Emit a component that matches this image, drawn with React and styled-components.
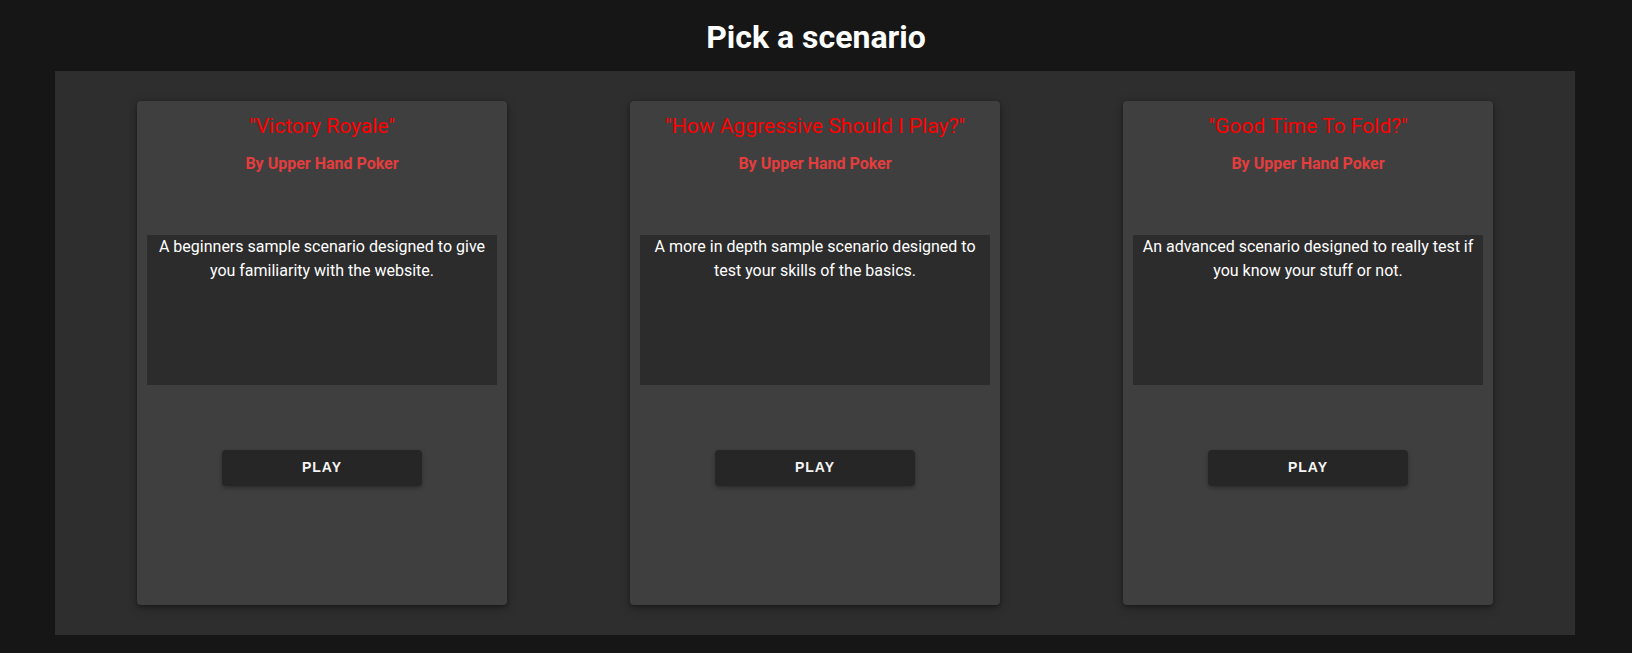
import React from "react";
import styled, { createGlobalStyle } from "styled-components";

const GlobalStyle = createGlobalStyle`
  html, body {
    margin: 0;
    padding: 0;
    background-color: #161616;
    font-family: Roboto, "Noto Sans", sans-serif;
  }
`;

const Page = styled.div`
  width: 100%;
  min-height: 653px;
  display: flex;
  flex-direction: column;
  align-items: center;
  box-sizing: border-box;
`;
const Heading = styled.h1`
  margin: 0;
  height: 71px;
  display: flex;
  align-items: center;
  justify-content: center;
  padding-top: 2px;
  box-sizing: border-box;
  font-size: 32px;
  font-weight: 700;
  color: #ffffff;
`;
const Panel = styled.div`
  width: 1520px;
  margin-left: -2px;
  display: flex;
  justify-content: space-between;
  box-sizing: border-box;
  padding: 30px 82px;
  background-color: #2e2e2e;
`;
const Card = styled.div`
  width: 370px;
  height: 504px;
  display: flex;
  flex-direction: column;
  align-items: center;
  box-sizing: border-box;
  padding: 10px;
  border-radius: 4px;
  background-color: #3f3f3f;
  box-shadow: 0 3px 10px rgba(0, 0, 0, 0.35), 0 1px 3px rgba(0, 0, 0, 0.25);
`;
const Title = styled.div`
  font-size: 21px;
  line-height: 30px;
  color: #ff0000;
  text-align: center;
`;
const Author = styled.div`
  margin-top: 11px;
  font-size: 16px;
  line-height: 24px;
  font-weight: 700;
  color: #e43d3d;
  text-align: center;
`;
const Description = styled.div`
  margin-top: 59px;
  width: 100%;
  height: 150px;
  box-sizing: border-box;
  padding: 0 8px;
  background-color: #2c2c2c;
  color: #ffffff;
  font-size: 16px;
  line-height: 24px;
  text-align: center;
`;
const PlayButton = styled.button`
  margin-top: 65px;
  width: 200px;
  height: 36px;
  padding: 0 0 2px;
  border: none;
  border-radius: 4px;
  background-color: #262626;
  color: #f5f5f5;
  font-family: "Liberation Sans", Arial, sans-serif;
  font-size: 14px;
  font-weight: 700;
  letter-spacing: 1px;
  text-transform: uppercase;
  box-shadow: 0 2px 4px rgba(0, 0, 0, 0.3);
  cursor: pointer;
`;

const scenarios = [
  {
    title: '"Victory Royale"',
    text: "A beginners sample scenario designed to give you familiarity with the website.",
  },
  {
    title: '"How Aggressive Should I Play?"',
    text: "A more in depth sample scenario designed to test your skills of the basics.",
  },
  {
    title: '"Good Time To Fold?"',
    text: "An advanced scenario designed to really test if you know your stuff or not.",
  },
];

function App() {
  return (
    <Page>
      <GlobalStyle />
      <Heading>Pick a scenario</Heading>
      <Panel>
        {scenarios.map((s) => (
          <Card key={s.title}>
            <Title>{s.title}</Title>
            <Author>By Upper Hand Poker</Author>
            <Description>{s.text}</Description>
            <PlayButton>Play</PlayButton>
          </Card>
        ))}
      </Panel>
    </Page>
  );
}

export default App;
